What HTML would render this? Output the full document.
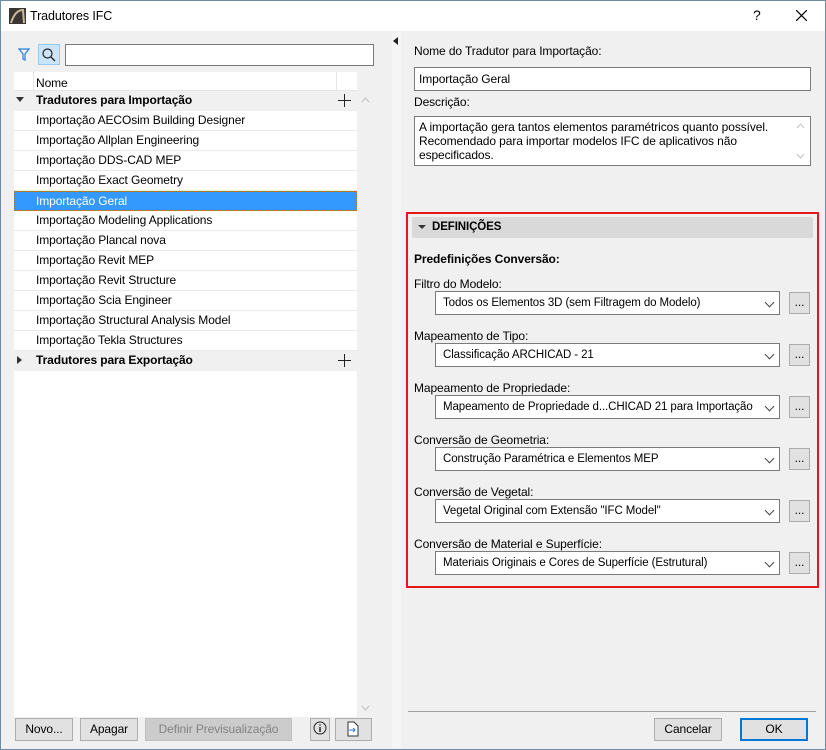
<!DOCTYPE html>
<html><head><meta charset="utf-8"><style>
*{box-sizing:border-box;margin:0;padding:0}
body{width:826px;height:750px;overflow:hidden;font:12px "Liberation Sans",sans-serif;letter-spacing:-0.1px;color:#000;background:#f0f0f0;position:relative}
.a{position:absolute}
.win{left:0;top:0;width:826px;height:750px;border:1px solid #6f8aa8}
.title{left:1px;top:1px;width:824px;height:30px;background:#fff}
.row{position:absolute;left:14px;width:343px;height:20px;border-bottom:1px solid #eaeaea;padding-left:22px;line-height:19px;background:#fff;white-space:nowrap}
.grp{background:#f0f0f0;font-weight:bold;border-bottom:none}
.sel{background:#3399ff;color:#fff;border:1px dotted #c07020;padding-left:21px}
.btn{position:absolute;height:23px;border:1px solid #adadad;background:#e1e1e1;text-align:center;line-height:21px}
.inp{position:absolute;background:#fff;border:1px solid #7a7a7a}
.lbl{position:absolute;white-space:nowrap}
.dd{position:absolute;left:435px;width:345px;height:24px;background:#fff;border:1px solid #7a7a7a;padding-left:7px;line-height:22px;white-space:nowrap;font-size:11.5px;overflow:hidden}
.dd:after{content:"";position:absolute;right:6px;top:7px;width:6px;height:6px;border-right:1px solid #444;border-bottom:1px solid #444;transform:rotate(45deg)}
.dots{position:absolute;left:789px;width:21px;height:22px;border:1px solid #adadad;background:#e1e1e1;text-align:center;line-height:18px}
</style></head><body>
<div class="a win"></div>
<div class="a title"></div>
<svg class="a" style="left:9px;top:8px" width="17" height="16"><rect width="17" height="16" fill="#3a3530"/><path d="M2 15 Q6 2 14 2 L15 15" stroke="#c9b99a" stroke-width="2" fill="none"/></svg>
<div class="lbl" style="left:30px;top:9px;font-size:12.5px">Tradutores IFC</div>
<div class="lbl" style="left:753px;top:7px;font-size:14px">?</div>
<svg class="a" style="left:796px;top:10px" width="11" height="11"><path d="M0 0L11 11M11 0L0 11" stroke="#000" stroke-width="1.2"/></svg>

<svg class="a" style="left:18px;top:48px" width="12" height="13"><path d="M1 1H11L7 6V12L5 11V6Z" fill="none" stroke="#2a7de1" stroke-width="1.2"/></svg>
<div class="a" style="left:38px;top:44px;width:22px;height:21px;background:#cce4f7;border:1px solid #99c9ef"></div>
<svg class="a" style="left:41px;top:47px" width="16" height="16"><circle cx="6.5" cy="6.5" r="4.5" fill="none" stroke="#222" stroke-width="1.2"/><path d="M10 10L14 14" stroke="#222" stroke-width="1.3"/></svg>
<div class="inp" style="left:65px;top:44px;width:309px;height:22px"></div>

<div class="a" style="left:14px;top:72px;width:343px;height:645px;background:#fff"></div>
<div class="a" style="left:14px;top:72px;width:343px;height:19px;background:#fff;border-bottom:1px solid #e5e5e5"></div>
<div class="a" style="left:33px;top:72px;width:1px;height:19px;background:#e5e5e5"></div>
<div class="a" style="left:336px;top:72px;width:1px;height:19px;background:#e5e5e5"></div>
<div class="lbl" style="left:36px;top:76px">Nome</div>
<div class="row grp" style="top:91px">Tradutores para Importação</div>
<div class="row" style="top:111px">Importação AECOsim Building Designer</div>
<div class="row" style="top:131px">Importação Allplan Engineering</div>
<div class="row" style="top:151px">Importação DDS-CAD MEP</div>
<div class="row" style="top:171px">Importação Exact Geometry</div>
<div class="row sel" style="top:191px">Importação Geral</div>
<div class="row" style="top:211px">Importação Modeling Applications</div>
<div class="row" style="top:231px">Importação Plancal nova</div>
<div class="row" style="top:251px">Importação Revit MEP</div>
<div class="row" style="top:271px">Importação Revit Structure</div>
<div class="row" style="top:291px">Importação Scia Engineer</div>
<div class="row" style="top:311px">Importação Structural Analysis Model</div>
<div class="row" style="top:331px">Importação Tekla Structures</div>
<div class="row grp" style="top:351px">Tradutores para Exportação</div>
<svg class="a" style="left:16px;top:97px" width="8" height="6"><path d="M0 0H8L4 5Z" fill="#333"/></svg>
<svg class="a" style="left:17px;top:356px" width="6" height="9"><path d="M0 0V8L5 4Z" fill="#333"/></svg>
<svg class="a" style="left:338px;top:94px" width="13" height="13"><path d="M6.5 0V13M0 6.5H13" stroke="#222"/></svg>
<svg class="a" style="left:338px;top:354px" width="13" height="13"><path d="M6.5 0V13M0 6.5H13" stroke="#222"/></svg>
<svg class="a" style="left:361px;top:97px" width="9" height="6"><path d="M1 5L4.5 1L8 5" stroke="#c0c0c0" fill="none"/></svg>
<svg class="a" style="left:361px;top:705px" width="9" height="6"><path d="M1 1L4.5 5L8 1" stroke="#c0c0c0" fill="none"/></svg>

<div class="btn" style="left:15px;top:718px;width:58px">Novo...</div>
<div class="btn" style="left:80px;top:718px;width:58px">Apagar</div>
<div class="btn" style="left:145px;top:718px;width:147px;background:#cccccc;border-color:#bfbfbf;color:#838383">Definir Previsualização</div>
<div class="btn" style="left:310px;top:718px;width:20px"></div>
<svg class="a" style="left:313px;top:721px" width="14" height="14"><circle cx="7" cy="7" r="6" fill="none" stroke="#222"/><path d="M7 6V11M7 3.5V4.8" stroke="#222" stroke-width="1.5"/></svg>
<div class="btn" style="left:335px;top:718px;width:37px"></div>
<svg class="a" style="left:347px;top:721px" width="12" height="16"><path d="M1 1H7L11 5V15H1Z" fill="#fff" stroke="#333"/><path d="M2 9H8M6 7L8 9L6 11" stroke="#2a7de1" fill="none"/></svg>

<div class="a" style="left:392px;top:32px;width:9px;height:716px;background:#f5f5f5"></div>
<svg class="a" style="left:393px;top:37px" width="5" height="8"><path d="M5 0V8L0 4Z" fill="#222"/></svg>

<div class="lbl" style="left:414px;top:44px">Nome do Tradutor para Importação:</div>
<div class="inp" style="left:414px;top:67px;width:397px;height:24px;padding:4px 4px;">Importação Geral</div>
<div class="lbl" style="left:414px;top:95px">Descrição:</div>
<div class="inp" style="left:414px;top:116px;width:397px;height:50px;padding:3px 4px;line-height:14px">A importação gera tantos elementos paramétricos quanto possível.<br>Recomendado para importar modelos IFC de aplicativos não<br>especificados.</div>
<svg class="a" style="left:796px;top:123px" width="9" height="6"><path d="M1 5L4.5 1L8 5" stroke="#c0c0c0" fill="none"/></svg>
<svg class="a" style="left:796px;top:153px" width="9" height="6"><path d="M1 1L4.5 5L8 1" stroke="#c0c0c0" fill="none"/></svg>

<div class="a" style="left:406px;top:212px;width:413px;height:376px;border:2px solid #e8141c"></div>
<div class="a" style="left:412px;top:217px;width:401px;height:21px;background:#d9d9d9;border-radius:2px"></div>
<svg class="a" style="left:418px;top:225px" width="8" height="5"><path d="M0 0H8L4 4Z" fill="#333"/></svg>
<div class="lbl" style="left:432px;top:221px;font-weight:bold;font-size:11.5px">DEFINIÇÕES</div>
<div class="lbl" style="left:414px;top:252px;font-weight:bold">Predefinições Conversão:</div>

<div class="lbl" style="left:414px;top:277px">Filtro do Modelo:</div>
<div class="dd" style="top:291px">Todos os Elementos 3D (sem Filtragem do Modelo)</div><div class="dots" style="top:292px">...</div>
<div class="lbl" style="left:414px;top:329px">Mapeamento de Tipo:</div>
<div class="dd" style="top:343px">Classificação ARCHICAD - 21</div><div class="dots" style="top:344px">...</div>
<div class="lbl" style="left:414px;top:381px">Mapeamento de Propriedade:</div>
<div class="dd" style="top:395px">Mapeamento de Propriedade d...CHICAD 21 para Importação</div><div class="dots" style="top:396px">...</div>
<div class="lbl" style="left:414px;top:433px">Conversão de Geometria:</div>
<div class="dd" style="top:447px">Construção Paramétrica e Elementos MEP</div><div class="dots" style="top:448px">...</div>
<div class="lbl" style="left:414px;top:485px">Conversão de Vegetal:</div>
<div class="dd" style="top:499px">Vegetal Original com Extensão "IFC Model"</div><div class="dots" style="top:500px">...</div>
<div class="lbl" style="left:414px;top:537px">Conversão de Material e Superfície:</div>
<div class="dd" style="top:551px">Materiais Originais e Cores de Superfície (Estrutural)</div><div class="dots" style="top:552px">...</div>

<div class="a" style="left:408px;top:711px;width:408px;height:1px;background:#a0a0a0"></div>
<div class="btn" style="left:654px;top:718px;width:68px">Cancelar</div>
<div class="btn" style="left:740px;top:718px;width:68px;border:2px solid #0078d7;line-height:19px">OK</div>
</body></html>
